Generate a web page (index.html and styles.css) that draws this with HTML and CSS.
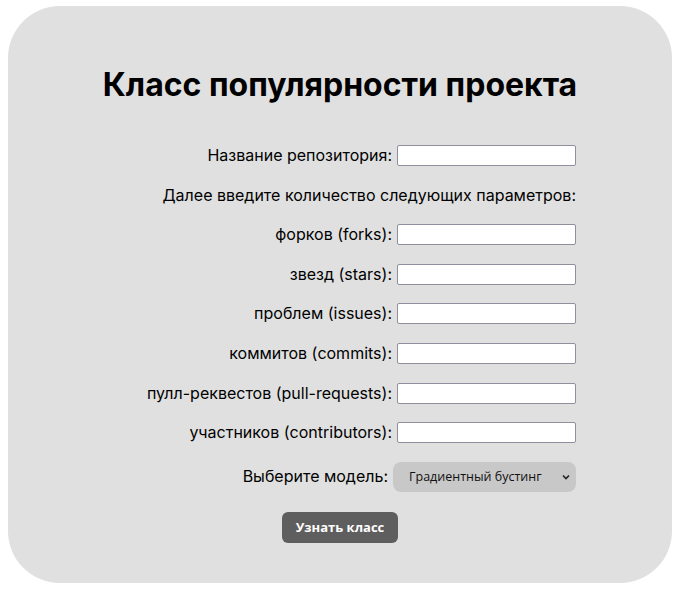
FILE: index.html
```html
<!DOCTYPE html>
<html lang="ru">
<head>
<meta charset="utf-8">
<title>Класс популярности проекта</title>
<link rel="stylesheet" href="styles.css">
</head>
<body>
<main class="card">
  <h1 class="title">Класс популярности проекта</h1>
  <form class="form">
    <div class="row"><label class="label" for="repo">Название репозитория:</label><input class="field" id="repo" type="text"></div>
    <div class="row"><span class="label">Далее введите количество следующих параметров:</span></div>
    <div class="row"><label class="label" for="forks">форков (forks):</label><input class="field" id="forks" type="text"></div>
    <div class="row"><label class="label" for="stars">звезд (stars):</label><input class="field" id="stars" type="text"></div>
    <div class="row"><label class="label" for="issues">проблем (issues):</label><input class="field" id="issues" type="text"></div>
    <div class="row"><label class="label" for="commits">коммитов (commits):</label><input class="field" id="commits" type="text"></div>
    <div class="row"><label class="label" for="pulls">пулл-реквестов (pull-requests):</label><input class="field" id="pulls" type="text"></div>
    <div class="row"><label class="label" for="contrib">участников (contributors):</label><input class="field" id="contrib" type="text"></div>
    <div class="row row-select"><label class="label" for="model">Выберите модель:</label>
      <div class="select">
        <span class="select-text">Градиентный бустинг</span>
        <svg class="chevron" width="8" height="6" viewBox="0 0 8 6"><path d="M1 1.5 L4 4.5 L7 1.5" fill="none" stroke="#222" stroke-width="1.6"/></svg>
      </div>
    </div>
    <div class="actions"><button class="btn" type="button">Узнать класс</button></div>
  </form>
</main>
</body>
</html>
```
FILE: styles.css
```css
* { box-sizing: border-box; }
html, body { margin: 0; padding: 0; background: #fff; }
body { padding: 6px 9px 0 8px; }
.card {
  width: 664px;
  height: 577px;
  background: #e0e0e0;
  border-radius: 52px;
  padding: 59px 96px 0 96px;
  font-family: Inter, "Noto Sans", sans-serif;
  color: #000;
}
.title {
  margin: 0 -20px 40px -20px;
  font-size: 32px;
  font-weight: 700;
  line-height: 40px;
  text-align: center;
  white-space: nowrap;
}
.form { display: flex; flex-direction: column; }
.row {
  display: flex;
  justify-content: flex-end;
  align-items: center;
  height: 21px;
  margin-bottom: 18.6px;
  gap: 5px;
}
.label { font-size: 16px; line-height: 21px; }
.field {
  width: 179px;
  height: 21px;
  border: 1px solid #8f8f9d;
  border-radius: 2px;
  background: #fff;
  margin: 0;
  padding: 1px 2px;
}
.row-select { height: 30px; margin-top: 0; margin-bottom: 20px; gap: 5px; }
.select {
  width: 183px;
  height: 30px;
  background: #c8c8c8;
  border-radius: 8px;
  display: flex;
  align-items: center;
  justify-content: space-between;
  padding: 0 6px 0 16px;
  font-family: "Open Sans", sans-serif;
  font-size: 12.5px;
  color: #111;
}
.chevron { display: block; }
.actions { display: flex; justify-content: center; }
.btn {
  width: 116px;
  height: 31px;
  border: none;
  border-radius: 6px;
  background: #5e5e5e;
  color: #fff;
  font-family: "Open Sans", sans-serif;
  font-weight: 700;
  font-size: 13px;
  padding: 0;
}
```
